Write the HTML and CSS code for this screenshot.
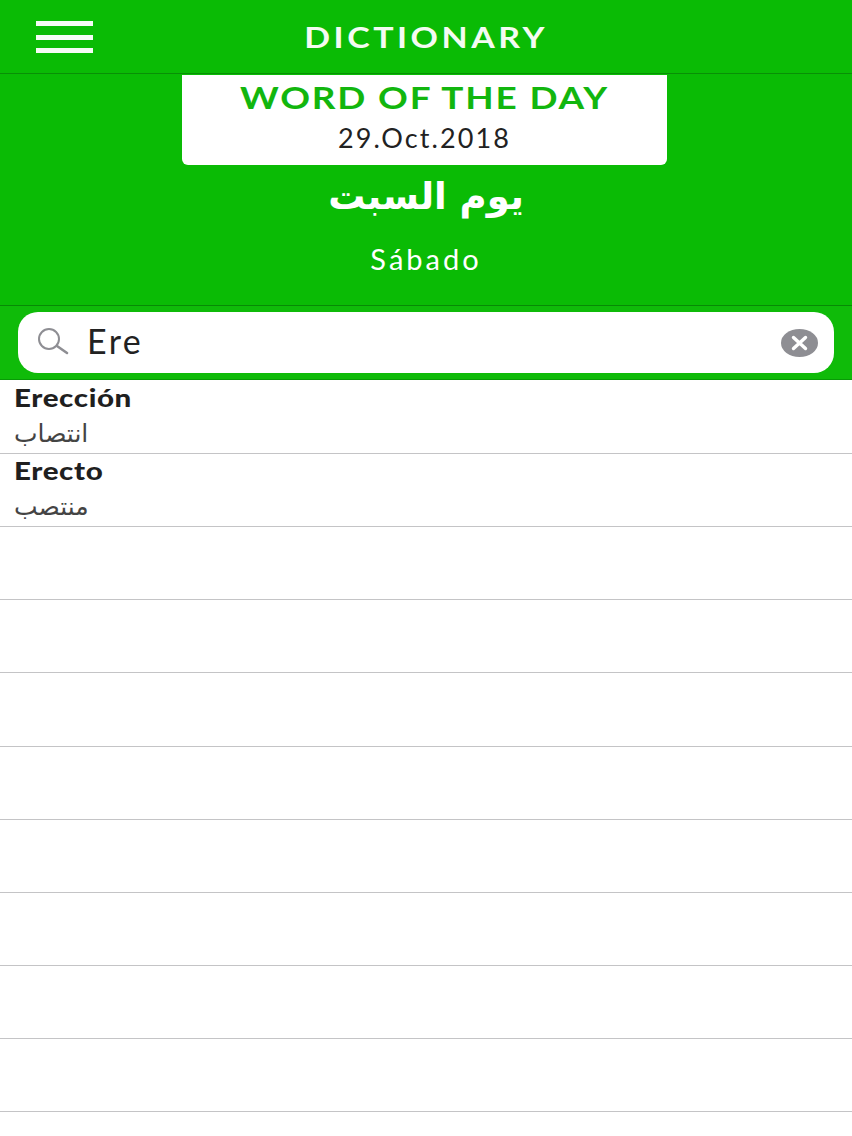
FILE: index.html
```html
<!DOCTYPE html>
<html lang="es">
<head>
    <meta charset="UTF-8">
    <meta name="viewport" content="width=device-width, initial-scale=1.0">
    <title>Dictionary</title>
    <link rel="stylesheet" href="styles.css">
</head>
<body>
    <header class="topbar">
        <div class="menu-btn"><span></span><span></span><span></span></div>
        <h1>DICTIONARY</h1>
    </header>

    <section class="word-day">
        <div class="word-card">
            <h2>WORD OF THE DAY</h2>
            <div class="word-date">29.Oct.2018</div>
        </div>
        <div class="word-ar" lang="ar" dir="rtl">يوم السبت</div>
        <div class="word-es">Sábado</div>
    </section>

    <div class="search-bar">
        <div class="search-box">
            <svg class="search-icon" width="34" height="34" viewBox="0 0 34 34" fill="none" stroke="#8e8e93">
                <circle cx="13" cy="13" r="10" stroke-width="2"/>
                <path d="M21 20 L31 27" stroke-width="2.6" stroke-linecap="round"/>
            </svg>
            <span class="search-text">Ere</span>
            <svg class="clear-icon" width="37" height="28" viewBox="0 0 37 28">
                <ellipse cx="18.5" cy="14" rx="18.5" ry="14" fill="#8e8e93"/>
                <path d="M12.5 8.5 L24.5 19.5 M24.5 8.5 L12.5 19.5" stroke="#fff" stroke-width="3.4" stroke-linecap="round"/>
            </svg>
        </div>
    </div>

    <ul class="results">
        <li><b>Erección</b><span lang="ar" dir="rtl">انتصاب</span></li>
        <li><b>Erecto</b><span lang="ar" dir="rtl">منتصب</span></li>
        <li></li>
        <li></li>
        <li></li>
        <li></li>
        <li></li>
        <li></li>
        <li></li>
        <li></li>
    </ul>
</body>
</html>
```

FILE: styles.css
```css
body {
    margin: 0;
    height: 1136px;
    overflow: hidden;
    background: #fff;
    font-family: Lato, "Open Sans", sans-serif;
}
.topbar {
    height: 73px;
    background: #0abb05;
    border-bottom: 1px solid #089006;
    display: flex;
    align-items: center;
    justify-content: center;
    position: relative;
}
.topbar h1 {
    margin: 0;
    color: #f4fbf2;
    font-size: 29px;
    font-weight: 700;
    letter-spacing: 3px;
    transform: scaleX(1.17);
}
.menu-btn {
    position: absolute;
    left: 36px;
    top: 21px;
    width: 57px;
    display: flex;
    flex-direction: column;
    gap: 8.5px;
}
.menu-btn span {
    height: 5px;
    background: #f6fcf5;
}
.word-day {
    height: 231px;
    background: #0abb05;
    border-bottom: 1px solid #078a05;
    display: flex;
    flex-direction: column;
    align-items: center;
    color: #fff;
}
.word-card {
    width: 485px;
    height: 90px;
    margin: 1px 3px 0 0;
    background: #fff;
    border-radius: 0 0 6px 6px;
    text-align: center;
}
.word-card h2 {
    margin: 0;
    padding-top: 3px;
    color: #12b60e;
    font-size: 30px;
    line-height: 38px;
    font-weight: 700;
    letter-spacing: 1.5px;
    transform: scaleX(1.23);
}
.word-date {
    margin-top: 5px;
    color: #222;
    font-size: 27px;
    line-height: 34px;
    letter-spacing: 2.1px;
}
.word-ar {
    margin-top: 7px;
    font-family: "DejaVu Sans", sans-serif;
    font-size: 37px;
    line-height: 50px;
    font-weight: 700;
}
.word-es {
    margin-top: 17px;
    font-size: 29px;
    line-height: 40px;
    letter-spacing: 3px;
}
.search-bar {
    height: 74px;
    background: #0fbb09;
    border-bottom: 1px solid #089a06;
    padding: 6px 18px 0;
    box-sizing: border-box;
}
.search-box {
    height: 61px;
    background: #fff;
    border-radius: 20px;
    display: flex;
    align-items: center;
    padding: 0 16px 0 18px;
}
.search-icon {
    flex: none;
}
.search-text {
    margin: 0 0 4px 17px;
    font-size: 34px;
    color: #222;
    flex: 1;
    letter-spacing: 2.5px;
}
.clear-icon {
    flex: none;
}
.results {
    list-style: none;
    margin: 0;
    padding: 1px 0 0;
}
.results li {
    height: 73.12px;
    box-sizing: border-box;
    border-bottom: 1px solid #c4c4c6;
    padding: 3px 14px 0;
    display: flex;
    flex-direction: column;
}
.results b {
    font-size: 24px;
    line-height: 28px;
    font-weight: 900;
    color: #1f1f1f;
    letter-spacing: 0.5px;
    transform: scaleX(1.23);
    transform-origin: left;
    align-self: flex-start;
}
.results span {
    margin-top: 4px;
    font-family: "DejaVu Sans", sans-serif;
    font-size: 25px;
    line-height: 36px;
    color: #444;
    align-self: flex-start;
}
```
